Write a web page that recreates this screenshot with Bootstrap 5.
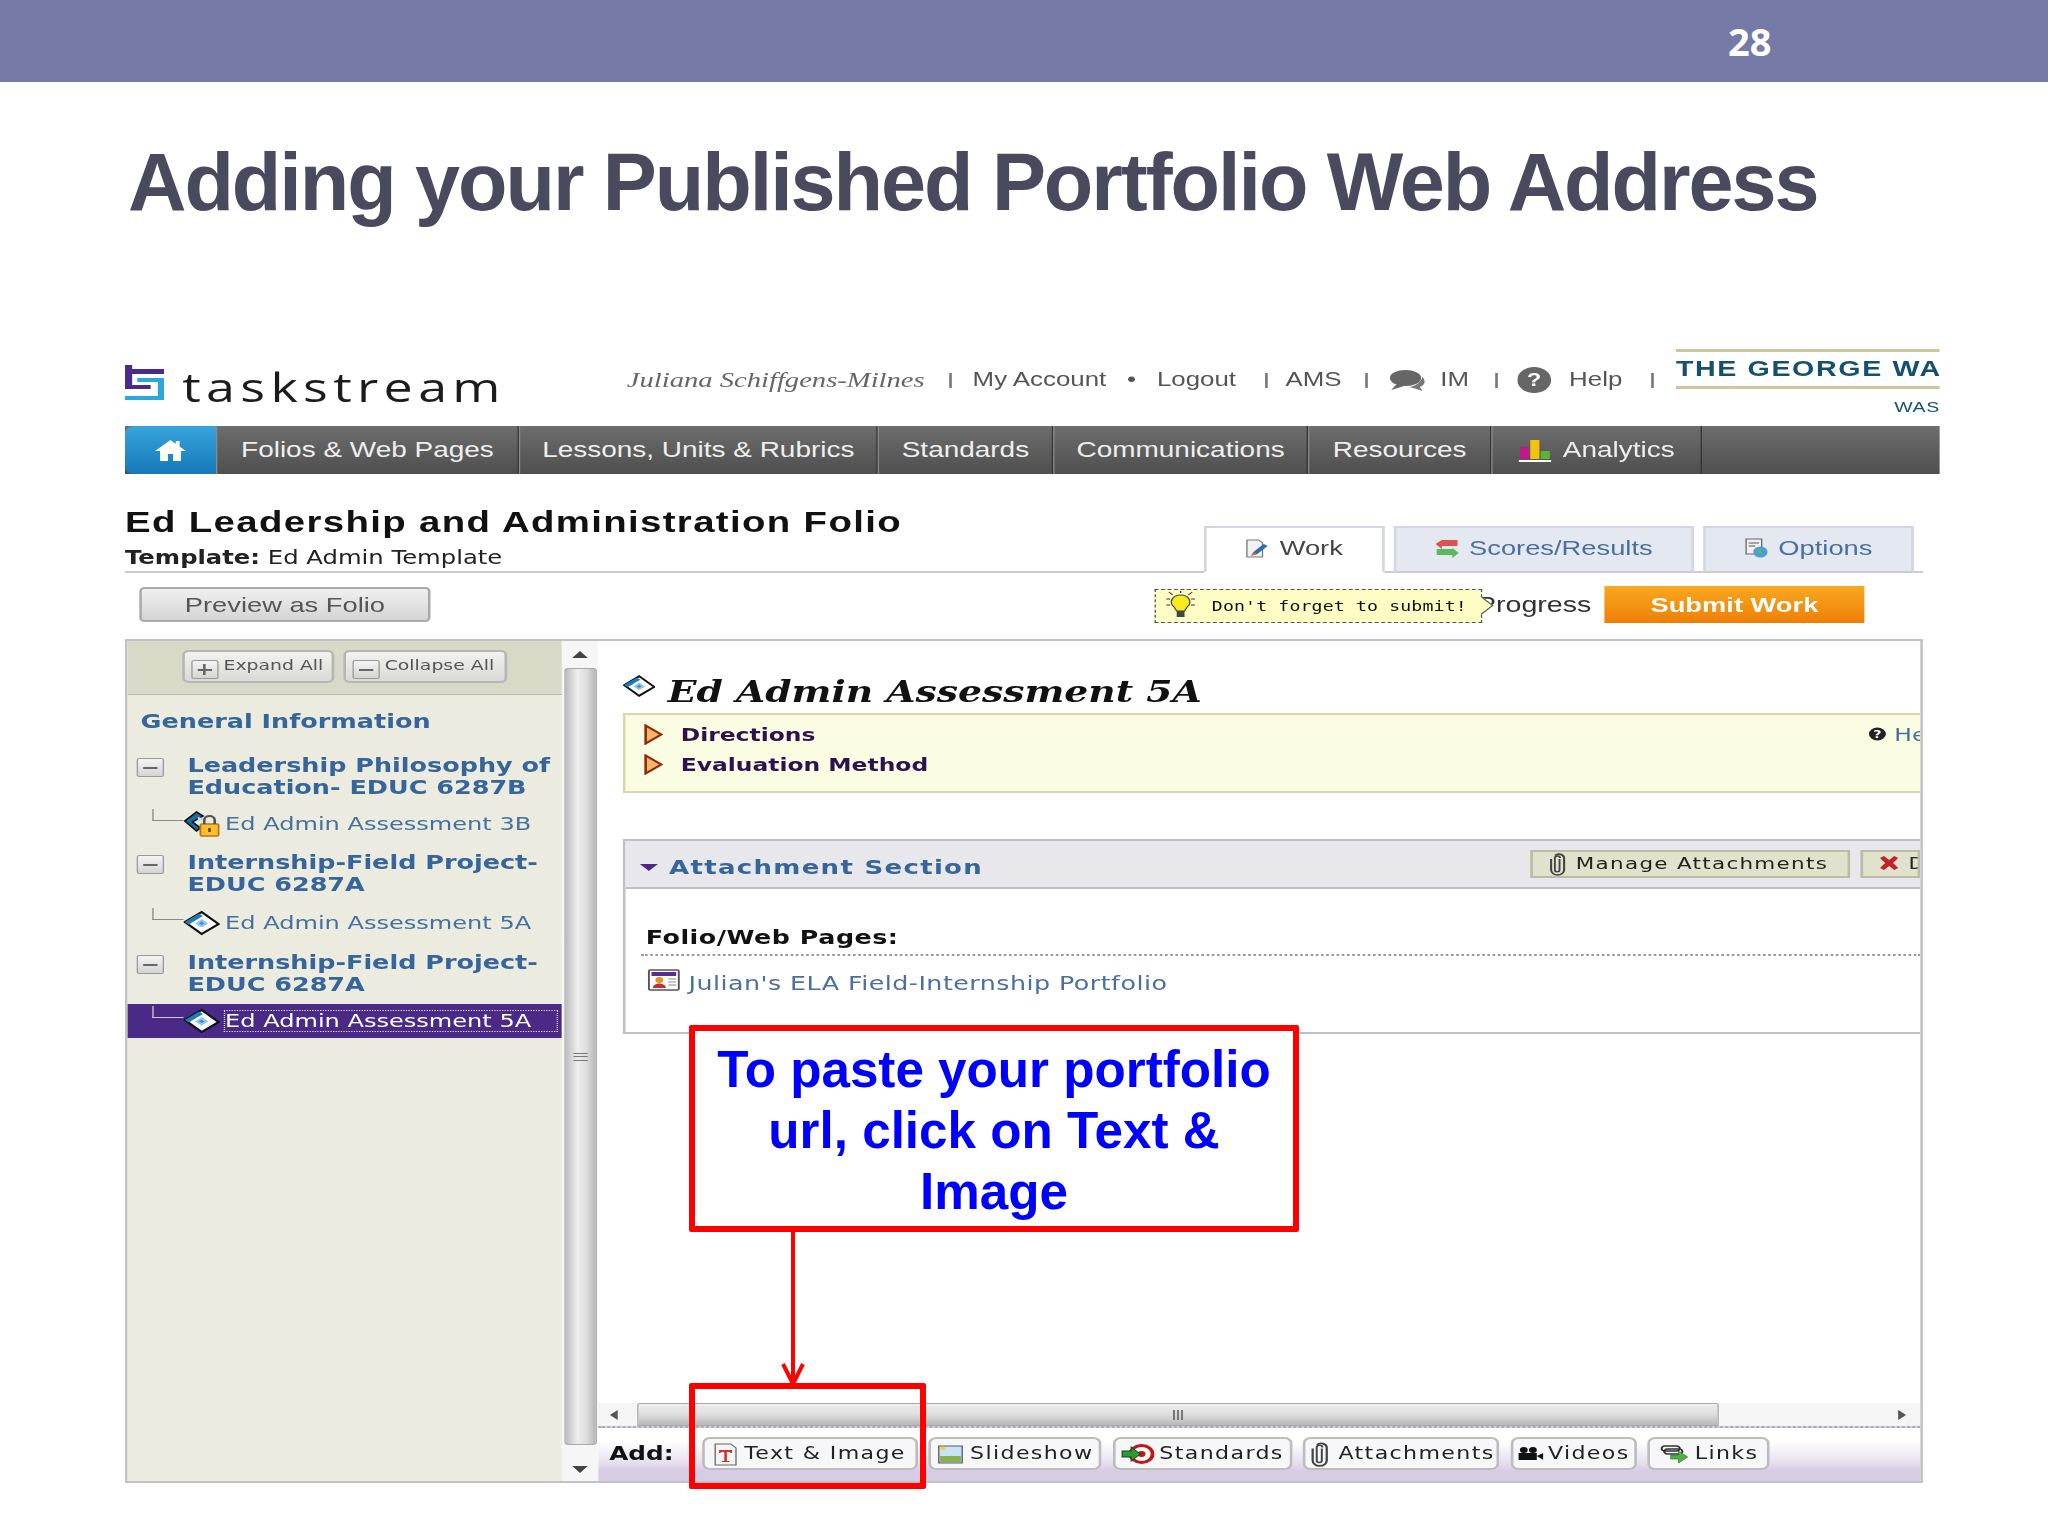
<!DOCTYPE html>
<html lang="en">
<head>
<meta charset="utf-8">
<title>Adding your Published Portfolio Web Address</title>
<link href="https://cdn.jsdelivr.net/npm/bootstrap@5.3.0/dist/css/bootstrap.min.css" rel="stylesheet">
<style>
html,body{margin:0;background:#fff;}
.ts-slide{position:relative;width:2048px;height:1536px;overflow:hidden;background:#fff;font-family:"Liberation Sans",Arial,sans-serif;}
.ts-topbar{height:82px;background:#757aa6;color:#fff;font:700 38px/82px "Open Sans","Liberation Sans",sans-serif;padding-left:1728px;}
.ts-title{margin:0;height:263px;padding:52px 0 0 128px;font:700 81px/1.2 "Liberation Sans",Arial,sans-serif;letter-spacing:-2.05px;color:#4a4a5e;white-space:nowrap;}
.ts-shot{position:relative;width:1396px;height:1140px;margin-left:125px;transform:scaleX(1.3);transform-origin:0 0;overflow:hidden;}
.ts-head{height:81px;position:relative;}
.ts-brand{width:386px;padding-top:20px;flex:none;}
.ts-brand svg{width:30px;height:35px;flex:none;}
.ts-brandname{font:500 40px/1 "Open Sans",sans-serif;letter-spacing:4.1px;color:#1c1c1c;margin-left:14px;margin-top:2px;}
.ts-links{font-size:19.9px;color:#555;padding-top:10px;height:60px;}
.ts-user{font:italic 400 22px/1 "Liberation Serif",serif;width:232px;color:#666;white-space:nowrap;}
.ts-sep{width:2px;height:15px;background:#777;flex:none;}
.ts-m11{margin-left:11px;}.ts-m14{margin-left:14px;}.ts-m15{margin-left:15px;}.ts-m16{margin-left:16px;}.ts-m17{margin-left:17px;}.ts-m18{margin-left:18px;}.ts-m20{margin-left:20px;}.ts-m22{margin-left:22px;}
.ts-gw{flex:none;width:203px;overflow:hidden;color:#15506f;white-space:nowrap;height:81px;position:absolute;left:1193px;top:0;}
.ts-gwname{margin-top:4px;border-top:3px solid #d0c4a4;border-bottom:3px solid #d0c4a4;height:40px;font:700 22px/34px "Liberation Sans",sans-serif;letter-spacing:1.25px;}
.ts-gwsub{text-align:right;font-size:15px;line-height:20px;margin-top:8px;letter-spacing:.5px;}
.ts-nav{height:48px;background:linear-gradient(#6d6d6d,#4f4f4f);font-size:21.5px;flex-wrap:nowrap;}
.ts-nav .nav-link{height:48px;padding:0;color:#eee;border-right:1px solid #333;border-left:1px solid #8a8a8a;margin:0;white-space:nowrap;display:flex;align-items:center;justify-content:center;flex:none;}
.ts-nav .nav-link:nth-child(2){width:233px;}
.ts-nav .nav-link:nth-child(3){width:276px;}
.ts-nav .nav-link:nth-child(4){width:135px;}
.ts-nav .nav-link:nth-child(5){width:196px;}
.ts-nav .nav-link:nth-child(6){width:141px;}
.ts-nav .nav-link:nth-child(7){width:162px;}
.ts-nav .ts-home{width:70px;background:linear-gradient(#38a4dd,#1578b8);border:0;border-radius:7px 0 0 7px;}
.ts-pagehead{width:1383px;height:99px;border-bottom:2px solid #ccc;}
.ts-pagetitle{font:700 29.5px/1 "Liberation Sans",sans-serif;letter-spacing:1.05px;color:#111;margin:33px 0 0;}
.ts-template{font:400 18.7px/1 "DejaVu Sans",sans-serif;color:#222;margin-top:12px;white-space:nowrap;}
.ts-tabs{gap:7px;padding-right:7px;margin-bottom:-2px;flex-wrap:nowrap;}
.ts-tab{height:47px;border:2px solid #d2d6df;border-bottom:2px solid #ccc;background:#e4e8f1;color:#4a6f9e;font-size:21px;display:flex;align-items:center;justify-content:center;gap:8px;padding-bottom:4px;}
.ts-tab.ts-on{background:#fff;color:#444;border-bottom-color:#fff;}
.ts-t1{width:139px;}.ts-t2{width:231px;}.ts-t3{width:162px;}
.ts-actions{position:relative;width:1383px;height:66px;padding:14px 45px 0 11px;}
.ts-preview.btn{width:224px;height:35px;padding:0;font-size:21px;line-height:29px;color:#555;border:2px solid #aaa;border-radius:4px;background:linear-gradient(#f0f0f0,#d4d4d4);}
.ts-progress{font-size:22px;color:#333;margin:0 10px 0 0;line-height:35px;}
.ts-submit.btn{width:200px;height:37px;padding:0;margin-top:-1px;font-size:21px;font-weight:700;color:#fff;border:0;border-radius:0;background:linear-gradient(#f9a820,#ee7f06);}
.ts-tip{position:absolute;left:792px;top:16px;width:252px;height:34px;background:#fdfdc4;border:1px dashed #555;display:flex;align-items:center;font:400 14px/1 "DejaVu Sans Mono",monospace;letter-spacing:.1px;color:#111;padding-left:6px;gap:11px;white-space:nowrap;}
.ts-tip::after{content:"";position:absolute;right:-7px;top:9px;width:13px;height:13px;background:#fdfdc4;border-top:1px solid #555;border-right:1px solid #555;transform:rotate(45deg);}
.ts-tip svg{width:26px;height:32px;flex:none;}
.ts-panel{width:1383px;height:844px;border:2px solid #c2c2c2;flex-wrap:nowrap;}
.ts-tree{width:333.5px;flex:none;background:#ebebe0;font-family:"DejaVu Sans",sans-serif;}
.ts-treebar{height:54px;padding-top:9px;background:#d8d9c6;border-bottom:1px solid #b9baa6;gap:7px;}
.ts-small.btn{height:33px;padding:0 5px;font-size:14.5px;line-height:1;color:#555;border:2px solid #b6b6b6;border-radius:5px;background:linear-gradient(#f2f2ee,#d9d9d6);display:flex;align-items:flex-start;gap:4px;padding-top:6px;white-space:nowrap;}
.ts-b1{width:117px;}.ts-b2{width:126px;}
.ts-box{display:inline-block;width:21px;height:19px;position:relative;border:1px solid #999;background:linear-gradient(#f4f4f4,#d4d4d4);border-radius:2px;flex:none;}
.ts-box::before{content:"";position:absolute;left:4px;right:4px;top:8px;height:1.5px;background:#666;}
.ts-box.ts-plus::after{content:"";position:absolute;left:8.5px;top:3px;bottom:3px;width:1.5px;background:#666;}
.ts-small .ts-box{margin-top:2px;}
.ts-gen{font-size:19.6px;font-weight:700;line-height:22px;color:#35659a;margin:16px 0 0 10px;white-space:nowrap;}
.ts-grp{margin-top:11px;padding-left:7px;display:flex;font-size:19.6px;font-weight:700;line-height:22px;color:#35659a;white-space:nowrap;}
.ts-grp .ts-box{margin:3px 18px 0 0;}
.ts-grp.ts-first{margin-top:22px;}
.ts-grp.ts-third{margin-top:12px;}
.ts-sub{height:34px;margin-top:10px;padding-left:19px;display:flex;align-items:center;font-size:18.5px;color:#43709f;white-space:nowrap;}
.ts-sub.ts-s1{margin-top:8px;}
.ts-conn{width:24px;height:12px;border-left:1.5px solid #888;border-bottom:1.5px solid #888;align-self:flex-start;margin-top:2px;flex:none;}
.ts-sub svg{width:28px;height:26px;flex:none;margin-right:4px;}
.ts-sub.ts-sel{margin-top:8px;background:#4b2a87;color:#fff;}
.ts-sel .ts-conn{border-color:#ccc;}
.ts-sel span.ts-lbl{outline:1.5px dotted #ddd;padding:0 9px 0 0;line-height:20px;flex:1;margin-right:4px;}
.ts-vs{width:28px;flex:none;background:#f6f6f6;}
.ts-arrowcell{height:27px;display:flex;align-items:center;justify-content:center;}
.ts-arrowcell.ts-down{height:36px;padding-top:12px;}
.ts-vthumb{flex:1;margin:0 1px 0 2px;border:1px solid #aaa;border-radius:3px;background:linear-gradient(90deg,#bdbdbd,#eee 40%,#ddd 70%,#b5b5b5);display:flex;align-items:center;justify-content:center;}
.ts-grip{width:11px;height:8px;border-top:1.5px solid #777;border-bottom:1.5px solid #777;position:relative;}
.ts-grip::before{content:"";position:absolute;left:0;right:0;top:2px;height:1.5px;background:#777;}
.ts-pane{flex:1;min-width:0;overflow:hidden;font-family:"DejaVu Sans",sans-serif;}
.ts-ptitle{height:72px;padding-left:19px;gap:11px;flex:none;}
.ts-ptitle svg{width:25px;height:24px;flex:none;align-self:flex-start;margin-top:33px;margin-right:-1px;}
.ts-ptitle h2{font:italic 700 29px/1 "DejaVu Serif",serif;letter-spacing:0;margin:0 0 6px;color:#111;white-space:nowrap;}
.ts-info{margin-left:19px;height:80px;flex:none;background:#fbfde2;border:2px solid #d6d8b0;border-right:0;padding:4px 0 0 14px;font-size:18px;font-weight:700;color:#2e1150;}
.ts-inforow{height:30px;display:flex;align-items:center;gap:14px;}
.ts-inforow svg{width:15px;height:21px;flex:none;}
.ts-help{margin-left:auto;display:flex;align-items:center;gap:6px;font-weight:400;font-size:18px;color:#43709f;width:40px;overflow:hidden;flex:none;}
.ts-help svg{width:14px;height:18px;}
.ts-att{margin:46px 0 0 19px;height:195px;flex:none;border:2px solid #bfbfc4;border-right:0;}
.ts-atthead{height:48px;background:#e8e8ec;border-bottom:2px solid #bfbfc4;padding:9px 0 0 11px;flex-wrap:nowrap;overflow:hidden;}
.ts-atthead h3{font-size:20px;font-weight:700;color:#35659a;margin:4px 0 0 9px;line-height:26px;letter-spacing:1px;white-space:nowrap;}
.ts-caret{width:0;height:0;border-left:7px solid transparent;border-right:7px solid transparent;border-top:7px solid #4b2a87;margin-top:14px;flex:none;}
.ts-mini.btn{height:28px;padding:0 0 0 10px;flex:none;background:#e0e2cb;border:2px solid #bbbca5;border-radius:0;font-size:16.5px;line-height:24px;letter-spacing:1px;color:#222;display:flex;align-items:center;gap:5px;white-space:nowrap;}
.ts-mini svg{height:24px;width:18px;flex:none;}
.ts-manage{width:246px;margin-left:auto;}
.ts-mini.ts-delete{width:46px;margin-left:8px;overflow:hidden;padding-left:11px;gap:6px;justify-content:flex-start;}
.ts-flabel{margin:38px 0 0 12px;padding:0 0 5px 4px;border-bottom:2px dotted #999;font-size:19.5px;letter-spacing:.4px;line-height:22px;font-weight:700;color:#111;}
.ts-flink{padding:13px 0 0 17px;gap:7px;font-size:19.5px;letter-spacing:.35px;color:#4a6fa0;white-space:nowrap;}
.ts-flink svg{width:25px;height:22px;flex:none;}
.ts-flink span{margin-top:4px;line-height:22px;}
.ts-hs{margin-top:auto;height:23px;flex:none;background:#f5f5f5;padding-left:30px;position:relative;}
.ts-hthumb{width:832px;border:1px solid #aaa;border-radius:2px 2px 0 0;background:linear-gradient(#eee,#ddd 50%,#b8b8b8);display:flex;align-items:center;justify-content:center;}
.ts-hthumb .ts-hg{width:8px;height:10px;background:repeating-linear-gradient(90deg,#777 0 1.5px,transparent 1.5px 3px);}
.ts-harrow{position:absolute;top:7px;width:0;height:0;border-top:5px solid transparent;border-bottom:5px solid transparent;}
.ts-hl{left:9px;border-right:6px solid #555;}
.ts-hr{left:1000px;border-left:6px solid #555;}
.ts-addbar{height:55px;flex:none;border-top:2px dotted #aaa;background:linear-gradient(#fff 25%,#e6e0ee 65%,#d6cce4 80%);padding:9px 0 0 9px;flex-wrap:nowrap;}
.ts-addlabel{font-size:19px;font-weight:700;color:#111;line-height:28px;margin:2px 21px 0 0;width:50px;}
.ts-add.btn{height:33px;padding:0;flex:none;background:#f7f6f8;border:2px solid #bcbcbc;border-radius:6px;font-size:17px;letter-spacing:1.05px;line-height:1;color:#222;display:flex;align-items:center;justify-content:center;gap:4px;margin-right:8.5px;white-space:nowrap;}
.ts-add svg{height:26px;width:20px;flex:none;}
.ts-add svg.ts-w22{width:22px;}.ts-add svg.ts-w24{width:24px;}.ts-add svg.ts-w26{width:26px;}
.ts-a1{width:166px;}.ts-a2{width:133px;}.ts-a3{width:138px;}.ts-a4{width:151px;}.ts-a5{width:97px;}.ts-a6{width:94px;}
.ts-redbox{position:absolute;border:6px solid #f00;border-radius:2px;}
.ts-callout{left:689px;top:1025px;width:610px;height:207px;background:#fff;color:#00f;font:700 51.2px/61px "Liberation Sans",sans-serif;text-align:center;padding:8px 10px 0;}
.ts-target{left:689px;top:1383px;width:237px;height:106px;}
.ts-arrow{position:absolute;left:778px;top:1230px;width:30px;height:156px;}
</style>
</head>
<body>
<svg width="0" height="0" class="position-absolute">
<symbol id="i-diamond" viewBox="0 0 28 26"><path d="M1 12 14 2l13 12-13 10z" fill="#fff" stroke="#111" stroke-width="2"/><path d="M1 12 12 3.500l3 2.500L4 14.500z" fill="#1f7fb5"/><path d="M14 9l5 4.500-5 4-5-4z" fill="#8cc4ea"/><path d="M14 11.500l2 2-2 1.600-2-1.600z" fill="#3a90cc"/></symbol>
<symbol id="i-lock" viewBox="0 0 28 26"><path d="M1 10 10 1l5 4-8 6 6 6-3 3z" fill="#1b6d9e" stroke="#111" stroke-width="1.500"/><path d="M11 6l7 2-7 3z" fill="#cde"/><rect x="13" y="13" width="14" height="12" rx="1" fill="#fbc02d" stroke="#c07010" stroke-width="1.400"/><path d="M16 13V9a4 4 0 0 1 8 0v4" fill="none" stroke="#555" stroke-width="2"/><rect x="19" y="17" width="2" height="4" fill="#704000"/></symbol>
<symbol id="i-tri" viewBox="0 0 15 21"><path d="M1.500 1.500 13.500 10.500 1.500 19.500z" fill="#f6b868" stroke="#8b2a10" stroke-width="2"/></symbol>
<symbol id="i-clip" viewBox="0 0 18 24"><path d="M10.500 7v11a1.800 1.800 0 0 1-3.600 0V6a2 2 0 0 1 4 0" fill="none" stroke="#444" stroke-width="1.400"/><path d="M4 7v11a5 5 0 0 0 10 0V6a4 4 0 0 0-7-2.500" fill="none" stroke="#444" stroke-width="1.600"/></symbol>
</svg>
<div class="ts-slide">
  <div class="ts-topbar">28</div>
  <h1 class="ts-title">Adding your Published Portfolio Web Address</h1>
  <div class="ts-shot">
    <header class="ts-head d-flex">
      <div class="ts-brand d-flex align-items-start">
        <svg viewBox="0 0 38 35" preserveAspectRatio="none"><path d="M0 0h7v4h31v5H7v11h18v4H0z" fill="#4a2a8c"/><path d="M12 13h26v22H0v-4h32V17H12z" fill="#2aa8dc"/></svg>
        <div class="ts-brandname">taskstream</div>
      </div>
      <div class="ts-links d-flex align-items-center flex-grow-1">
        <span class="ts-user">Juliana Schiffgens-Milnes</span>
        <span class="ts-sep ts-m16"></span>
        <span class="ts-m16">My Account</span>
        <span class="ts-m16">•</span>
        <span class="ts-m16">Logout</span>
        <span class="ts-sep ts-m22"></span>
        <span class="ts-m14">AMS</span>
        <span class="ts-sep ts-m18"></span>
        <svg class="ts-m17" width="28" height="24" viewBox="0 0 28 24"><ellipse cx="12" cy="10" rx="12" ry="8" fill="#666"/><path d="M6 15 1 22l10-4z" fill="#666"/><path d="M25 9c3 4 2 8-2 10l2 4-7-3c-1 0-2-1-3-1 5-1 9-5 10-10z" fill="#777"/></svg>
        <span class="ts-m11">IM</span>
        <span class="ts-sep ts-m20"></span>
        <svg class="ts-m15" width="26" height="26" viewBox="0 0 26 26"><circle cx="13" cy="13" r="13" fill="#666"/><text x="13" y="19" font-size="18" font-weight="700" text-anchor="middle" fill="#fff">?</text></svg>
        <span class="ts-m14">Help</span>
        <span class="ts-sep ts-m22"></span>
      </div>
      <div class="ts-gw">
        <div class="ts-gwname">THE GEORGE WA</div>
        <div class="ts-gwsub">WAS</div>
      </div>
    </header>
    <nav class="nav ts-nav">
      <a class="nav-link ts-home" href="#"><svg width="24" height="22" viewBox="0 0 24 22"><path d="M12 1 0 12h4v10h6v-7h4v7h6V12h4l-5-4.500V2h-3v3z" fill="#fff"/></svg></a>
      <a class="nav-link" href="#">Folios &amp; Web Pages</a>
      <a class="nav-link" href="#">Lessons, Units &amp; Rubrics</a>
      <a class="nav-link" href="#">Standards</a>
      <a class="nav-link" href="#">Communications</a>
      <a class="nav-link" href="#">Resources</a>
      <a class="nav-link" href="#"><svg class="me-2" width="26" height="26" viewBox="0 0 26 26"><rect x="1" y="10" width="7" height="12" fill="#c2188b"/><rect x="9" y="3" width="7" height="19" fill="#f4c20d"/><rect x="17" y="14" width="7" height="8" fill="#5cb531"/><rect x="0" y="23" width="25" height="2" fill="#fff"/></svg>Analytics</a>
    </nav>
    <div class="ts-pagehead d-flex justify-content-between align-items-start">
      <div>
        <div class="ts-pagetitle">Ed Leadership and Administration Folio</div>
        <div class="ts-template"><b>Template:</b> Ed Admin Template</div>
      </div>
      <div class="nav ts-tabs align-self-end">
        <div class="ts-tab ts-on ts-t1"><svg width="18" height="22" viewBox="0 0 18 22"><path d="M1 3h9l3 3v14H1z" fill="#f2f2f2" stroke="#777"/><path d="M6 15 14 7l3 2-8 8-4 1z" fill="#2a6db5"/><path d="M6 15 9 17 4 19z" fill="#d9622b"/></svg>Work</div>
        <div class="ts-tab ts-t2"><svg width="18" height="22" viewBox="0 0 18 22"><path d="M5 3h12v6H5v3L0 7l5-4z" fill="#d9534f"/><path d="M13 12H1v6h12v3l5-5-5-5z" fill="#5cb85c"/></svg>Scores/Results</div>
        <div class="ts-tab ts-t3"><svg width="18" height="22" viewBox="0 0 18 22"><rect x="1" y="2" width="12" height="15" fill="#f1f1f1" stroke="#666"/><path d="M3 6h8M3 9h5" stroke="#555"/><circle cx="12" cy="15" r="5.500" fill="#4a9fd4"/><path d="M9 12l4 2-2 4z" fill="#5cb85c"/></svg>Options</div>
      </div>
    </div>
    <div class="ts-actions d-flex justify-content-between align-items-start">
      <button class="btn ts-preview" type="button">Preview as Folio</button>
      <div class="d-flex">
        <p class="ts-progress">Progress</p>
        <button class="btn ts-submit" type="button">Submit Work</button>
      </div>
      <div class="ts-tip"><svg viewBox="0 0 26 32"><path d="M13 5a7 7 0 0 0-5 12l2 4h6l2-4a7 7 0 0 0-5-12z" fill="#f8ea1e" stroke="#444"/><rect x="10" y="21" width="6" height="6" fill="#444"/><path d="M2 9h3M21 9h3M4 2l3 3M22 2l-3 3M2 15h3M21 15h3M13 1v2" stroke="#333"/></svg>Don't forget to submit!</div>
    </div>
    <div class="ts-panel d-flex">
      <aside class="ts-tree">
        <div class="ts-treebar d-flex justify-content-center">
          <button class="btn ts-small ts-b1" type="button"><span class="ts-box ts-plus"></span>Expand All</button>
          <button class="btn ts-small ts-b2" type="button"><span class="ts-box"></span>Collapse All</button>
        </div>
        <div class="ts-gen">General Information</div>
        <div class="ts-grp ts-first"><span class="ts-box"></span><div>Leadership Philosophy of<br>Education- EDUC 6287B</div></div>
        <div class="ts-sub ts-s1"><span class="ts-conn"></span><svg><use href="#i-lock"/></svg><span>Ed Admin Assessment 3B</span></div>
        <div class="ts-grp"><span class="ts-box"></span><div>Internship-Field Project-<br>EDUC 6287A</div></div>
        <div class="ts-sub"><span class="ts-conn"></span><svg><use href="#i-diamond"/></svg><span>Ed Admin Assessment 5A</span></div>
        <div class="ts-grp ts-third"><span class="ts-box"></span><div>Internship-Field Project-<br>EDUC 6287A</div></div>
        <div class="ts-sub ts-sel"><span class="ts-conn"></span><svg><use href="#i-diamond"/></svg><span class="ts-lbl">Ed Admin Assessment 5A</span></div>
      </aside>
      <div class="ts-vs d-flex flex-column">
        <div class="ts-arrowcell"><svg width="12" height="7" viewBox="0 0 12 7"><path d="M6 0 12 7H0z" fill="#444"/></svg></div>
        <div class="ts-vthumb"><span class="ts-grip"></span></div>
        <div class="ts-arrowcell ts-down"><svg width="12" height="7" viewBox="0 0 12 7"><path d="M6 7 12 0H0z" fill="#444"/></svg></div>
      </div>
      <main class="ts-pane d-flex flex-column">
        <div class="ts-ptitle d-flex align-items-end">
          <svg><use href="#i-diamond"/></svg>
          <h2>Ed Admin Assessment 5A</h2>
        </div>
        <div class="ts-info">
          <div class="ts-inforow"><svg><use href="#i-tri"/></svg>Directions
            <span class="ts-help"><svg viewBox="0 0 14 18"><circle cx="7" cy="9" r="6.500" fill="#222"/><text x="7" y="13" font-size="11" font-weight="700" text-anchor="middle" fill="#fff">?</text></svg>He</span>
          </div>
          <div class="ts-inforow"><svg><use href="#i-tri"/></svg>Evaluation Method</div>
        </div>
        <section class="ts-att">
          <div class="ts-atthead d-flex">
            <span class="ts-caret"></span>
            <h3>Attachment Section</h3>
            <button class="btn ts-mini ts-manage" type="button"><svg><use href="#i-clip"/></svg>Manage Attachments</button>
            <button class="btn ts-mini ts-delete" type="button"><svg viewBox="0 0 18 24"><path d="M2 6l3-2 4 4 4-4 3 2-4 5 4 5-3 2-4-4-4 4-3-2 4-5z" fill="#c4202c"/></svg>D</button>
          </div>
          <div class="ts-flabel">Folio/Web Pages:</div>
          <div class="ts-flink d-flex align-items-start">
            <svg viewBox="0 0 25 22"><rect x="1" y="1" width="23" height="20" rx="1" fill="#fff" stroke="#555" stroke-width="1.500"/><rect x="3" y="3" width="19" height="4" fill="#5a2d90"/><circle cx="9" cy="11" r="3" fill="#e69020"/><path d="M4 19c0-6 10-6 10 0z" fill="#c03030"/><path d="M16 10h6M16 13h6M16 16h6" stroke="#888"/></svg>
            <span>Julian's ELA Field-Internship Portfolio</span>
          </div>
        </section>
        <div class="ts-hs d-flex">
          <span class="ts-harrow ts-hl"></span>
          <div class="ts-hthumb"><span class="ts-hg"></span></div>
          <span class="ts-harrow ts-hr"></span>
        </div>
        <div class="ts-addbar d-flex">
          <div class="ts-addlabel">Add:</div>
          <button class="btn ts-add ts-a1" type="button"><svg viewBox="0 0 20 26"><path d="M2 3h12l4 4v17H2z" fill="#f4f4f4" stroke="#666"/><path d="M5 9h10v3h-1l-1-1h-2v9h2v1H7v-1h2v-9H7l-1 1H5z" fill="#c33"/></svg>Text &amp; Image</button>
          <button class="btn ts-add ts-a2" type="button"><svg class="ts-w22" viewBox="0 0 20 26"><rect x="1" y="5" width="18" height="17" fill="#c8e4f4" stroke="#557"/><rect x="2" y="15" width="16" height="6" fill="#8ab04a"/><circle cx="4" cy="7.500" r="2" fill="#f4d820"/></svg>Slideshow</button>
          <button class="btn ts-add ts-a3" type="button"><svg class="ts-w26" viewBox="0 0 24 26"><circle cx="15" cy="13" r="8.500" fill="#fff" stroke="#c01818" stroke-width="3"/><circle cx="15" cy="13" r="3" fill="#c01818"/><path d="M0 10h7V6l7 7-7 7v-4H0z" fill="#2d9a2d" stroke="#143" stroke-width=".8"/></svg>Standards</button>
          <button class="btn ts-add ts-a4" type="button"><svg><use href="#i-clip"/></svg>Attachments</button>
          <button class="btn ts-add ts-a5" type="button"><svg viewBox="0 0 20 26"><circle cx="5" cy="9" r="3" fill="#111"/><circle cx="12" cy="9" r="3" fill="#111"/><rect x="1" y="12" width="14" height="7" fill="#111"/><path d="M15 15l5-3v7z" fill="#111"/></svg>Videos</button>
          <button class="btn ts-add ts-a6" type="button"><svg class="ts-w24" viewBox="0 0 22 26"><rect x="1" y="5" width="14" height="5" rx="2.500" fill="none" stroke="#333" stroke-width="1.500"/><rect x="3" y="8" width="14" height="5" rx="2.500" fill="none" stroke="#333" stroke-width="1.500"/><path d="M8 14h6v-4l7 6-7 6v-4H8z" fill="#54b044" stroke="#2a7a2a" stroke-width=".6"/></svg>Links</button>
        </div>
      </main>
    </div>
  </div>
  <div class="ts-redbox ts-callout">To paste your portfolio url, click on Text &amp; Image</div>
  <svg class="ts-arrow" viewBox="0 0 30 156"><path d="M15 0V154" stroke="#f00" stroke-width="4"/><path d="M5 134 15 154 25 134" fill="none" stroke="#f00" stroke-width="4"/></svg>
  <div class="ts-redbox ts-target"></div>
</div>
<script src="https://cdn.jsdelivr.net/npm/bootstrap@5.3.0/dist/js/bootstrap.bundle.min.js"></script>
</body>
</html>
